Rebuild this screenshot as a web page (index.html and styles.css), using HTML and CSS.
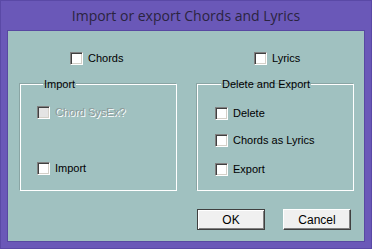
FILE: index.html
```html
<!DOCTYPE html>
<html>
<head>
<meta charset="utf-8">
<link rel="stylesheet" href="styles.css">
</head>
<body>
<div class="window">
  <div class="titlebar">Import or export Chords and Lyrics</div>
  <div class="client">
    <div class="top-row">
      <label class="check"><span class="box"></span><span class="text">Chords</span></label>
      <label class="check"><span class="box"></span><span class="text">Lyrics</span></label>
    </div>
    <div class="groups">
      <fieldset class="group group-import">
        <legend>Import</legend>
        <label class="check disabled item-sysex"><span class="box"></span><span class="text">Chord SysEx?</span></label>
        <label class="check item-import"><span class="box"></span><span class="text">Import</span></label>
      </fieldset>
      <fieldset class="group group-export">
        <legend>Delete and Export</legend>
        <label class="check item-delete"><span class="box"></span><span class="text">Delete</span></label>
        <label class="check item-cal"><span class="box"></span><span class="text">Chords as Lyrics</span></label>
        <label class="check item-export"><span class="box"></span><span class="text">Export</span></label>
      </fieldset>
    </div>
    <div class="buttons">
      <button class="btn btn-default">OK</button>
      <button class="btn">Cancel</button>
    </div>
  </div>
</div>
</body>
</html>
```

FILE: styles.css
```css
html, body {
  margin: 0;
  padding: 0;
  background: #6a58b8;
}
.window {
  box-sizing: border-box;
  width: 372px;
  height: 249px;
  background: #6a58b8;
  border: 1px solid #5a49a6;
  padding: 0 6px 6px;
}
.titlebar {
  height: 29px;
  line-height: 30px;
  text-align: center;
  font-family: "Open Sans", "Noto Sans", sans-serif;
  font-size: 14px;
  color: #2a2440;
  white-space: nowrap;
}
.client {
  box-sizing: border-box;
  height: 212px;
  border: 1px solid #5848a2;
  background: #a0c1c0;
  font-family: "Liberation Sans", Arial, sans-serif;
  font-size: 11px;
  color: #000;
}
.top-row {
  display: grid;
  grid-template-columns: 184px 1fr;
  padding-top: 21px;
}
.top-row .check {
  padding-left: 62px;
}
.check {
  display: flex;
  align-items: center;
  height: 13px;
  line-height: 13px;
  white-space: nowrap;
}
.box {
  box-sizing: border-box;
  width: 13px;
  height: 13px;
  flex: none;
  background: #fff;
  border-top: 1px solid #808080;
  border-left: 1px solid #808080;
  border-right: 1px solid #fff;
  border-bottom: 1px solid #fff;
  box-shadow: inset 1px 1px 0 #404040, inset -1px -1px 0 #d4d0c8;
}
.text {
  margin-left: 5px;
}
.disabled .box {
  background: #e4e4e4;
}
.disabled .text {
  color: #8c9a9a;
  text-shadow: 1px 1px 0 #fff;
}
.groups {
  display: grid;
  grid-template-columns: 157px 157px;
  column-gap: 20px;
  padding-left: 12px;
  margin-top: 13px;
}
.group {
  margin: 0;
  padding: 0 0 0 16px;
  min-inline-size: 0;
  border: 1px solid #fff;
  box-shadow: -1px -1px 0 #8aa5a4;
}
.group legend {
  font-size: 11px;
  line-height: 13px;
  padding: 0 1px;
  margin-left: 6px;
}
.group-import {
  padding-bottom: 15px;
}
.item-sysex { margin-top: 15px; }
.item-import { margin-top: 43px; }
.group-export {
  padding-left: 17px;
  padding-bottom: 14px;
}
.item-delete { margin-top: 16px; }
.item-cal { margin-top: 14px; }
.item-export { margin-top: 16px; }
.buttons {
  display: flex;
  justify-content: flex-end;
  gap: 18px;
  padding-right: 13px;
  margin-top: 18px;
}
.btn {
  box-sizing: border-box;
  width: 68px;
  height: 21px;
  margin: 0;
  padding: 0;
  font-family: "Liberation Sans", Arial, sans-serif;
  font-size: 12px;
  color: #000;
  background: #f0f0f0;
  border-top: 1px solid #fff;
  border-left: 1px solid #fff;
  border-right: 1px solid #404040;
  border-bottom: 1px solid #404040;
  box-shadow: inset -1px -1px 0 #808080;
}
.btn-default {
  border: 1px solid #404040;
  box-shadow: inset 1px 1px 0 #fff, inset -1px -1px 0 #808080;
}
```
